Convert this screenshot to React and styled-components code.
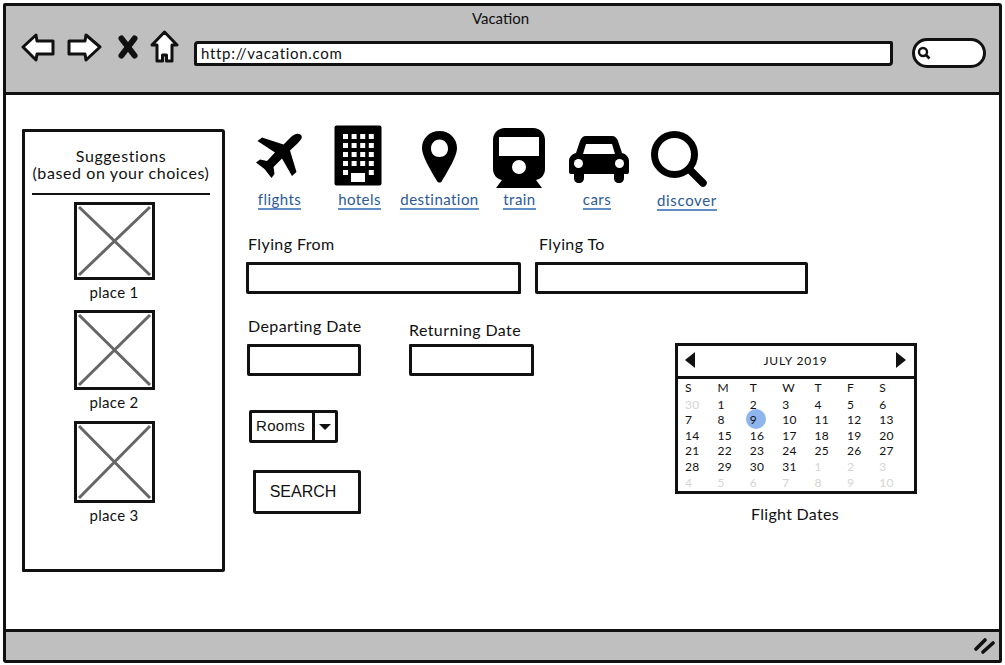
import React from 'react';
import styled, { createGlobalStyle } from 'styled-components';

const ink = '#111';
const sketchFont = `Lato, "Noto Sans", sans-serif`;

const GlobalStyle = createGlobalStyle`
  html, body {
    margin: 0;
    padding: 0;
    background: #fff;
  }
  body {
    font-family: ${sketchFont};
    color: ${ink};
  }
`;

const BrowserWindow = styled.div`
  box-sizing: border-box;
  width: 999px;
  height: 660px;
  margin: 3px 0 0 3px;
  border: 3px solid ${ink};
  border-radius: 2px 3px 2px 3px;
  display: flex;
  flex-direction: column;
  background: #fff;
`;

const TitleBar = styled.header`
  box-sizing: border-box;
  height: 89px;
  background: #bfbfbf;
  border-bottom: 3px solid ${ink};
  padding-top: 3px;
`;

const WindowTitle = styled.div`
  text-align: center;
  font-size: 15px;
  line-height: 19px;
  padding-right: 4px;
`;

const NavRow = styled.div`
  display: flex;
  align-items: center;
  margin-top: 2px;
  padding-left: 15px;
`;

const NavIcon = styled.svg`
  display: block;
  flex: none;
  margin-left: ${(p) => p.$gap || 0}px;
  margin-bottom: 6px;
`;

const UrlBar = styled.div`
  box-sizing: border-box;
  width: 699px;
  height: 25px;
  margin: 6px 0 0 15px;
  padding-left: 4px;
  background: #fff;
  border: 3px solid ${ink};
  border-radius: 4px 2px 4px 2px;
  font-size: 15px;
  line-height: 18px;
  letter-spacing: 0.7px;
`;

const SearchPill = styled.div`
  box-sizing: border-box;
  width: 74px;
  height: 30px;
  margin: 6px 0 0 19px;
  padding-left: 2px;
  display: flex;
  align-items: center;
  background: #fff;
  border: 3px solid ${ink};
  border-radius: 15px;
`;

const Body = styled.main`
  flex: 1;
  display: flex;
  align-items: flex-start;
  padding: 34px 0 0 16px;
  min-height: 0;
`;

const Sidebar = styled.aside`
  box-sizing: border-box;
  flex: none;
  width: 203px;
  height: 443px;
  border: 3px solid ${ink};
  border-radius: 1px 3px 2px 1px;
  padding: 15px 5px 0 0;
  display: flex;
  flex-direction: column;
  align-items: center;
`;

const SidebarTitle = styled.div`
  width: 178px;
  padding-bottom: 12px;
  border-bottom: 2px solid ${ink};
  text-align: center;
  font-size: 16px;
  line-height: 17px;
  letter-spacing: 0.6px;
  white-space: nowrap;
  margin-bottom: 7px;
`;

const Place = styled.figure`
  margin: 0 14px ${(p) => p.$gap}px 0;
  display: flex;
  flex-direction: column;
  align-items: center;
`;

const PlaceImage = styled.svg`
  display: block;
  box-sizing: border-box;
  width: 81px;
  height: ${(p) => p.$height}px;
  border: 3px solid ${ink};
  background: #fff;
`;

const PlaceLabel = styled.figcaption`
  font-size: 15px;
  line-height: 19px;
  margin-top: 3px;
  letter-spacing: 0.3px;
`;

const Content = styled.section`
  flex: 1;
  margin-left: 22px;
  margin-top: -4px;
`;

const IconRow = styled.nav`
  display: flex;
  height: 87px;
`;

const IconLink = styled.a`
  width: ${(p) => p.$width}px;
  flex: none;
  display: flex;
  flex-direction: column;
  align-items: center;
  height: 87px;
`;

const IconSlot = styled.div`
  box-sizing: border-box;
  height: 64px;
  display: flex;
  align-items: ${(p) => p.$align || 'center'};
  margin-bottom: 1px;
  padding: ${(p) => p.$pad || '0'};
`;

const LinkText = styled.span`
  font-size: 15px;
  line-height: 18px;
  color: #2c5a97;
  letter-spacing: ${(p) => (p.$drop ? 0.65 : 0.45)}px;
  padding-bottom: 0;
  border-bottom: 2px solid #5f8fc4;
  margin-top: ${(p) => p.$drop || 0}px;
`;

const FieldRow = styled.div`
  display: flex;
  gap: 14px;
  margin-top: 22px;
  margin-left: -1px;
`;

const Field = styled.div`
  width: ${(p) => p.$width}px;
`;

const FieldLabel = styled.label`
  display: block;
  font-size: 16px;
  line-height: 19px;
  letter-spacing: 0.4px;
  margin-left: ${(p) => p.$indent ?? 2}px;
  margin-bottom: 9px;
  white-space: nowrap;
`;

const TextBox = styled.div`
  box-sizing: border-box;
  height: 32px;
  background: #fff;
  border: 3px solid ${ink};
  border-radius: 1px 2px 1px 2px;
`;

const LowerArea = styled.div`
  display: flex;
  margin-top: 22px;
`;

const DateColumn = styled.div`
  width: 428px;
  flex: none;
`;

const DateRow = styled.div`
  display: flex;
`;

const DateField = styled.div`
  width: ${(p) => p.$width}px;
  margin-left: ${(p) => p.$offset || 0}px;
  padding-top: ${(p) => p.$drop || 0}px;
`;

const DateBox = styled(TextBox)`
  margin-top: ${(p) => p.$top || 0}px;
`;

const RoomsSelect = styled.div`
  box-sizing: border-box;
  width: 89px;
  height: 33px;
  margin: 34px 0 0 2px;
  display: flex;
  background: #fff;
  border: 3px solid ${ink};
  border-radius: 2px;
  font-family: "Liberation Sans", Arial, sans-serif;
  font-size: 15px;
  letter-spacing: 0.3px;
`;

const RoomsText = styled.div`
  flex: 1;
  padding: 4px 0 0 4px;
`;

const RoomsArrow = styled.div`
  width: 20px;
  border-left: 3px solid ${ink};
  display: flex;
  align-items: center;
  justify-content: center;
  &::after {
    content: '';
    border-left: 6px solid transparent;
    border-right: 6px solid transparent;
    border-top: 6px solid ${ink};
  }
`;

const SearchButton = styled.button`
  display: block;
  box-sizing: border-box;
  width: 108px;
  height: 44px;
  margin: 27px 0 0 6px;
  padding: 0 8px 0 0;
  background: #fff;
  border: 3px solid ${ink};
  border-radius: 1px 2px 1px 3px;
  font-family: "Liberation Sans", Arial, sans-serif;
  font-size: 16px;
  color: ${ink};
`;

const CalendarColumn = styled.div`
  width: 242px;
`;

const Calendar = styled.div`
  box-sizing: border-box;
  width: 242px;
  height: 151px;
  border: 3px solid ${ink};
  background: #fff;
  margin-top: 27px;
`;

const CalendarHead = styled.div`
  box-sizing: border-box;
  height: 33px;
  border-bottom: 3px solid ${ink};
  display: flex;
  align-items: center;
  justify-content: space-between;
  padding: 0 8px 2px 7px;
`;

const MonthName = styled.div`
  font-size: 12px;
  letter-spacing: 0.8px;
`;

const CalendarArrow = styled.div`
  width: 0;
  height: 0;
  border-top: 8px solid transparent;
  border-bottom: 8px solid transparent;
  ${(p) => (p.$right ? `border-left: 10px solid ${ink};` : `border-right: 10px solid ${ink};`)}
`;

const DayGrid = styled.div`
  display: grid;
  grid-template-columns: repeat(7, 32.4px);
  grid-auto-rows: 15.6px;
  padding: 1px 0 0 7px;
  font-size: 12px;
  line-height: 15.5px;
  letter-spacing: 0.3px;
`;

const DayHead = styled.div`
  padding-bottom: 2px;
`;

const Day = styled.div`
  position: relative;
  color: ${(p) => (p.$muted ? '#d4d4d4' : ink)};
  transform: translateY(1px);
  ${(p) => p.$selected && `
    z-index: 0;
    &::before {
      content: '';
      position: absolute;
      z-index: -1;
      left: -4px;
      top: -3px;
      width: 20px;
      height: 20px;
      border-radius: 50%;
      background: #8fb5ef;
    }
  `}
`;

const CalendarCaption = styled.div`
  text-align: center;
  font-size: 16px;
  line-height: 18px;
  letter-spacing: 0.3px;
  margin-top: 11px;
  padding-right: 2px;
`;

const StatusBar = styled.footer`
  box-sizing: border-box;
  height: 31px;
  flex: none;
  background: #bfbfbf;
  border-top: 3px solid ${ink};
  display: flex;
  justify-content: flex-end;
  align-items: center;
  padding-right: 3px;
`;

const BackIcon = () => (
  <NavIcon width="34" height="30" viewBox="0 0 34 30" $gap={0}>
    <path d="M2 15 L15 3 L16 9 L32 9 L32 22 L16 22 L15 28 Z" fill="#fff" stroke={ink} strokeWidth="3" strokeLinejoin="round" />
  </NavIcon>
);

const ForwardIcon = () => (
  <NavIcon width="35" height="30" viewBox="0 0 35 30" $gap={12}>
    <path d="M33 15 L19 3 L18 9 L2 9 L2 22 L18 22 L19 28 Z" fill="#fff" stroke={ink} strokeWidth="3" strokeLinejoin="round" />
  </NavIcon>
);

const StopIcon = () => (
  <NavIcon width="20" height="24" viewBox="0 0 20 24" $gap={16}>
    <path d="M3.5 3.5 L16.5 20.5 M16.5 3.5 L3.5 20.5" stroke={ink} strokeWidth="6" strokeLinecap="round" />
  </NavIcon>
);

const HomeIcon = () => (
  <NavIcon width="29" height="34" viewBox="0 0 29 34" $gap={12}>
    <path d="M14.5 2 L27 15 L22 15 L22 31 L16.5 31 L16.5 25 L12.5 25 L12.5 31 L7 31 L7 15 L2 15 Z" fill="#fff" stroke={ink} strokeWidth="3" strokeLinejoin="round" />
  </NavIcon>
);

const PlaneIcon = () => (
  <svg width="48" height="46" viewBox="0 0 48 46">
    <path d="M46 2 C43 -0.5 39 1 36 4 L28.5 11.5 L7 4.5 L2.5 8 L20 19.5 L12 28 L5 26.5 L1 29.5 L9.5 36 L16.5 45 L19.5 41 L18.5 34 L27 25.5 L37 43 L41.5 39 L35 17.5 L43 10 C46 7 48 4.5 46 2 Z" fill="#000" />
  </svg>
);

const HotelIcon = () => {
  const windows = [];
  [0, 1, 2, 3, 4].forEach((r) => {
    [0, 1, 2, 3].forEach((c) => {
      if (r === 4 && (c === 1 || c === 2)) return;
      windows.push(<rect key={`${r}-${c}`} x={9 + c * 8.6} y={9 + r * 9} width="5" height="5" fill="#fff" />);
    });
  });
  return (
    <svg width="48" height="61" viewBox="0 0 48 61">
      <rect x="0.5" y="0.5" width="47" height="60" rx="2" fill="#000" />
      {windows}
      <rect x="17" y="48" width="14" height="9" fill="#fff" />
    </svg>
  );
};

const PinIcon = () => (
  <svg width="35" height="52" viewBox="0 0 35 52">
    <path fillRule="evenodd" d="M17.5 0 C7.5 0 0 7.5 0 17 C0 26 11 43 15 50 C16 52 19 52 20 50 C24 43 35 26 35 17 C35 7.5 27.5 0 17.5 0 Z M17.5 8.5 C22.5 8.5 26 12.5 26 17.5 C26 22.5 22.5 26 17.5 26 C12.5 26 9 22.5 9 17.5 C9 12.5 12.5 8.5 17.5 8.5 Z" fill="#000" />
  </svg>
);

const TrainIcon = () => (
  <svg width="52" height="60" viewBox="0 0 52 60">
    <path fillRule="evenodd" d="M12 0 L40 0 C47 0 52 5 52 12 L52 41 C52 47 48 51 43 52 L49 60 L3 60 L9 52 C4 51 0 47 0 41 L0 12 C0 5 5 0 12 0 Z M6 9 L6 28 L46 28 L46 9 Z" fill="#000" />
    <circle cx="26" cy="39" r="7" fill="#fff" />
  </svg>
);

const CarIcon = () => (
  <svg width="60" height="47" viewBox="0 0 60 47">
    <path fillRule="evenodd" d="M17 0 L43 0 C46 0 48 2 49 5 L53 17 C57 18 60 21 60 25 L60 36 C60 37 59 38 58 38 L55 38 L55 42 C55 45 53 47 50 47 C47 47 45 45 45 42 L45 38 L15 38 L15 42 C15 45 13 47 10 47 C7 47 5 45 5 42 L5 38 L2 38 C1 38 0 37 0 36 L0 25 C0 21 3 18 7 17 L11 5 C12 2 14 0 17 0 Z M17 8 L14 18 L46 18 L43 8 Z" fill="#000" />
    <circle cx="9.5" cy="27.5" r="4.5" fill="#fff" />
    <circle cx="50.5" cy="27.5" r="4.5" fill="#fff" />
  </svg>
);

const DiscoverIcon = () => (
  <svg width="57" height="57" viewBox="0 0 57 57">
    <circle cx="23.5" cy="23.5" r="20" fill="none" stroke="#000" strokeWidth="7" />
    <path d="M38 38 L52 52" stroke="#000" strokeWidth="7.5" strokeLinecap="round" />
  </svg>
);

const places = [
  { label: 'place 1', height: 78, gap: 8 },
  { label: 'place 2', height: 80, gap: 9 },
  { label: 'place 3', height: 82, gap: 0 },
];

const links = [
  { label: 'flights', width: 65, icon: <PlaneIcon />, pad: '0 2px 2px 0' },
  { label: 'hotels', width: 95, icon: <HotelIcon />, align: 'flex-start', pad: '0 4px 0 0' },
  { label: 'destination', width: 65, icon: <PinIcon /> },
  { label: 'train', width: 95, icon: <TrainIcon />, pad: '2px 2px 0 0' },
  { label: 'cars', width: 60, icon: <CarIcon />, pad: '4px 0 0 4px' },
  { label: 'discover', width: 120, icon: <DiscoverIcon />, drop: 1, pad: '4px 16px 0 0' },
];

const weekdays = ['S', 'M', 'T', 'W', 'T', 'F', 'S'];

const days = [
  [30, true], [1], [2], [3], [4], [5], [6],
  [7], [8], [9, false, true], [10], [11], [12], [13],
  [14], [15], [16], [17], [18], [19], [20],
  [21], [22], [23], [24], [25], [26], [27],
  [28], [29], [30], [31], [1, true], [2, true], [3, true],
  [4, true], [5, true], [6, true], [7, true], [8, true], [9, true], [10, true],
];

export default function App() {
  return (
    <>
      <GlobalStyle />
      <BrowserWindow>
        <TitleBar>
          <WindowTitle>Vacation</WindowTitle>
          <NavRow>
            <BackIcon />
            <ForwardIcon />
            <StopIcon />
            <HomeIcon />
            <UrlBar>http://vacation.com</UrlBar>
            <SearchPill>
              <svg width="14" height="14" viewBox="0 0 14 14">
                <circle cx="6" cy="6" r="4" fill="none" stroke={ink} strokeWidth="2.4" />
                <path d="M9 9 L12.5 12.5" stroke={ink} strokeWidth="2.6" />
              </svg>
            </SearchPill>
          </NavRow>
        </TitleBar>

        <Body>
          <Sidebar>
            <SidebarTitle>
              Suggestions
              <br />
              (based on your choices)
            </SidebarTitle>
            {places.map((place) => (
              <Place key={place.label} $gap={place.gap}>
                <PlaceImage $height={place.height} viewBox="0 0 75 75" preserveAspectRatio="none">
                  <path d="M2 2 L73 73 M73 2 L2 73" stroke="#666" strokeWidth="3" />
                </PlaceImage>
                <PlaceLabel>{place.label}</PlaceLabel>
              </Place>
            ))}
          </Sidebar>

          <Content>
            <IconRow>
              {links.map((link) => (
                <IconLink key={link.label} $width={link.width}>
                  <IconSlot $align={link.align} $pad={link.pad}>{link.icon}</IconSlot>
                  <LinkText $drop={link.drop}>{link.label}</LinkText>
                </IconLink>
              ))}
            </IconRow>

            <FieldRow>
              <Field $width={275}>
                <FieldLabel>Flying From</FieldLabel>
                <TextBox />
              </Field>
              <Field $width={273}>
                <FieldLabel $indent={4}>Flying To</FieldLabel>
                <TextBox />
              </Field>
            </FieldRow>

            <LowerArea>
              <DateColumn>
                <DateRow>
                  <DateField $width={114}>
                    <FieldLabel $indent={1}>Departing Date</FieldLabel>
                    <DateBox />
                  </DateField>
                  <DateField $width={125} $offset={48} $drop={4}>
                    <FieldLabel $indent={0}>Returning Date</FieldLabel>
                    <DateBox $top={-4} />
                  </DateField>
                </DateRow>
                <RoomsSelect>
                  <RoomsText>Rooms</RoomsText>
                  <RoomsArrow />
                </RoomsSelect>
                <SearchButton>SEARCH</SearchButton>
              </DateColumn>

              <CalendarColumn>
                <Calendar>
                  <CalendarHead>
                    <CalendarArrow />
                    <MonthName>JULY 2019</MonthName>
                    <CalendarArrow $right />
                  </CalendarHead>
                  <DayGrid>
                    {weekdays.map((day, i) => (
                      <DayHead key={i}>{day}</DayHead>
                    ))}
                    {days.map(([day, muted, selected], i) => (
                      <Day key={i} $muted={muted} $selected={selected}>{day}</Day>
                    ))}
                  </DayGrid>
                </Calendar>
                <CalendarCaption>Flight Dates</CalendarCaption>
              </CalendarColumn>
            </LowerArea>
          </Content>
        </Body>

        <StatusBar>
          <svg width="22" height="18" viewBox="0 0 22 18">
            <path d="M2 12 L11 3 M9 15 L19 6" stroke={ink} strokeWidth="3.6" strokeLinecap="round" />
          </svg>
        </StatusBar>
      </BrowserWindow>
    </>
  );
}
